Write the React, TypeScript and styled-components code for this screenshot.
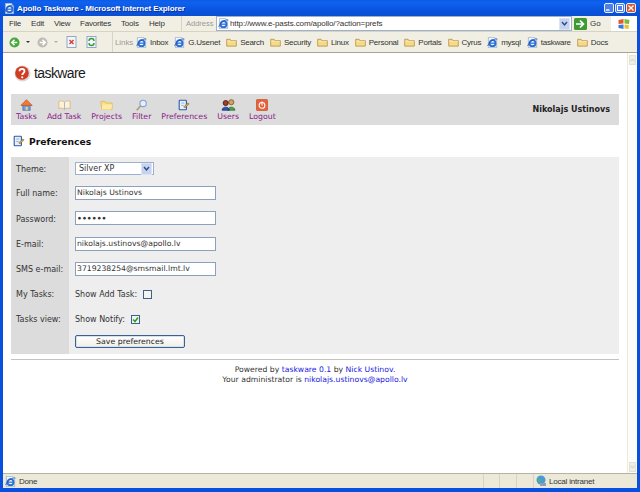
import styled, { createGlobalStyle } from "styled-components"

const GlobalStyle = createGlobalStyle`
  html, body {
    margin: 0;
    padding: 0;
    width: 640px;
    height: 492px;
    overflow: hidden;
  }
`

const Window = styled.div`
  display: flex;
  flex-direction: column;
  width: 640px;
  height: 492px;
  box-sizing: border-box;
  padding: 0 3px 4px;
  background: #0a50e0;
  font-family: "Liberation Sans", Arial, sans-serif;
  font-size: 9px;
  color: #222;
`

const TitleBar = styled.div`
  display: flex;
  align-items: center;
  height: 16px;
  margin: 0 -3px;
  padding: 0 4px 0 4px;
  gap: 1px;
  background: linear-gradient(180deg, #0a5be8 0%, #0f62ee 15%, #0852dd 70%, #0a4fd0 100%);
  color: #fff;
  font-size: 8px;
  font-weight: bold;
  letter-spacing: -0.1px;
  text-shadow: 1px 1px 0 #0a2f9c;
`

const TitleText = styled.span`
  flex: 1;
  margin-left: 1px;
  white-space: nowrap;
`

const WinButton = styled.div<{ $close?: boolean }>`
  display: flex;
  align-items: center;
  justify-content: center;
  width: 8px;
  height: 8px;
  border: 1px solid #e8eefc;
  border-radius: 2px;
  box-sizing: content-box;
  background: ${(p) => (p.$close ? "#d9532c" : "#4f80ea")};
`

const MenuRow = styled.div`
  display: flex;
  align-items: stretch;
  height: 16px;
  background: #f1efe4;
  border-bottom: 1px solid #d8d4c2;
  box-sizing: border-box;
`

const MenuItems = styled.div`
  display: flex;
  align-items: center;
  width: 179px;
  padding-left: 6px;
  box-sizing: border-box;
  border-right: 1px solid #d8d4c2;
`

const MenuItem = styled.span<{ $w: number }>`
  width: ${(p) => p.$w}px;
  font-size: 8px;
  letter-spacing: -0.2px;
  color: #333;
`

const AddressLabel = styled.span`
  display: flex;
  align-items: center;
  width: 34px;
  box-sizing: border-box;
  padding-left: 4px;
  color: #999;
  font-size: 7.5px;
`

const AddressBox = styled.div`
  display: flex;
  flex: 1;
  align-items: center;
  gap: 1px;
  padding-left: 1px;
  background: #fff;
  border: 1px solid #9db1cc;
  font-size: 8px;
  letter-spacing: -0.1px;
  color: #333;
  white-space: nowrap;
`

const AddressText = styled.span`
  flex: 1;
`

const Dropdown = styled.div`
  display: flex;
  align-items: center;
  justify-content: center;
  width: 11px;
  height: 12px;
  margin-right: 1px;
  background: #c5d3f0;
  border: 1px solid #dbe4f6;
  box-sizing: border-box;
`

const GoButton = styled.div`
  display: flex;
  align-items: center;
  gap: 3px;
  width: 39px;
  padding-left: 2px;
  box-sizing: border-box;
  font-size: 8px;
  color: #333;
`

const Flag = styled.div`
  display: flex;
  align-items: center;
  justify-content: center;
  width: 26px;
  background: #fff;
`

const ToolRow = styled.div`
  display: flex;
  align-items: center;
  height: 21px;
  background: #f1efe4;
  border-bottom: 1px solid #a7a493;
  box-sizing: border-box;
`

const ToolGroup = styled.div`
  display: flex;
  align-items: center;
  width: 110px;
  height: 100%;
  padding-left: 5px;
  box-sizing: border-box;
  border-right: 1px solid #d8d4c2;
`

const ToolIcon = styled.span<{ $gap: number }>`
  display: flex;
  margin-left: ${(p) => p.$gap}px;
`

const SmallArrow = styled.span<{ $dim?: boolean }>`
  width: 0;
  height: 0;
  margin-left: 6px;
  border-left: 2px solid transparent;
  border-right: 2px solid transparent;
  border-top: 2px solid ${(p) => (p.$dim ? "#b0aea2" : "#333")};
`

const LinksLabel = styled.span`
  width: 21px;
  margin-left: 2px;
  color: #999;
  font-size: 8px;
  letter-spacing: -0.1px;
`

const LinkItem = styled.span`
  display: inline-flex;
  align-items: center;
  gap: 3px;
  padding-right: 6px;
  font-size: 8px;
  letter-spacing: -0.25px;
  color: #333;
  white-space: nowrap;
`

const Main = styled.div`
  display: flex;
  flex: 1;
  min-height: 0;
  background: #fff;
`

const Page = styled.div`
  flex: 1;
  padding: 0 8px;
  font-family: "DejaVu Sans", Verdana, sans-serif;
  font-size: 8px;
  color: #333;
`

const Scrollbar = styled.div`
  width: 10px;
  background: #fdfdfa;
  border-left: 1px solid #eceae0;
  display: flex;
  flex-direction: column;
  justify-content: space-between;
  padding: 2px 1px 1px;
  box-sizing: border-box;
`

const ScrollButton = styled.div`
  display: flex;
  align-items: center;
  justify-content: center;
  height: 10px;
  background: #f0efe6;
  border: 1px solid #e4e2d4;
  box-sizing: border-box;
`

const Logo = styled.div`
  display: flex;
  align-items: center;
  gap: 3px;
  height: 41px;
  padding: 0 0 1px 3px;
  box-sizing: border-box;
  font-family: "Liberation Sans", Arial, sans-serif;
  font-size: 14px;
  letter-spacing: -0.6px;
  color: #1a1a1a;
`

const NavBar = styled.div`
  display: flex;
  align-items: center;
  justify-content: space-between;
  height: 31px;
  padding: 0 9px 0 5px;
  background: #dcdcdc;
`

const NavItems = styled.div`
  display: flex;
  gap: 10px;
`

const NavItem = styled.a`
  display: flex;
  flex-direction: column;
  align-items: center;
  gap: 1px;
  font-size: 7.8px;
  color: #8a1a8a;
  white-space: nowrap;
`

const UserName = styled.span`
  font-weight: bold;
  color: #222;
`

const Heading = styled.h1`
  display: flex;
  align-items: center;
  gap: 4px;
  height: 32px;
  margin: 0;
  padding-left: 2px;
  font-size: 9.2px;
  font-weight: bold;
  color: #111;
`

const FormTable = styled.div`
  display: grid;
  grid-template-columns: 58px 1fr;
  grid-template-rows: 23px 25px 26px 25px 25px 25px 25px 23px;
  height: 197px;
  background: #eeeeee;
`

const Label = styled.div`
  display: flex;
  align-items: center;
  padding: 2px 0 0 5px;
  background: #dcdcdc;
`

const Field = styled.div<{ $top?: number; $bottom?: number }>`
  display: flex;
  align-items: center;
  gap: 6px;
  padding: ${(p) => p.$top ?? 0}px 0 ${(p) => p.$bottom ?? 0}px 6px;
`

const SelectBox = styled.div`
  display: flex;
  align-items: center;
  justify-content: space-between;
  width: 79px;
  height: 13px;
  box-sizing: border-box;
  padding: 0 0 0 3px;
  background: #fff;
  border: 1px solid #9db1cc;
`

const TextInput = styled.input`
  width: 141px;
  height: 14px;
  box-sizing: border-box;
  padding: 0 1px;
  background: #fff;
  border: 1px solid #8ba0bc;
  font-family: "DejaVu Sans", Verdana, sans-serif;
  font-size: 7.7px;
  color: #333;
  outline: none;

  &[type="password"] {
    font-weight: bold;
  }
`

const Check = styled.span`
  display: flex;
  align-items: center;
  justify-content: center;
  width: 7px;
  height: 7px;
  background: #f4f4ee;
  border: 1px solid #3e5f90;
`

const SaveButton = styled.button`
  width: 110px;
  height: 13px;
  padding: 0;
  background: linear-gradient(180deg, #ffffff, #f0efe6);
  border: 1px solid #3e5f90;
  border-radius: 2px;
  box-shadow: inset 0 0 0 1px #d5e0f0;
  font-family: "DejaVu Sans", Verdana, sans-serif;
  font-size: 7.8px;
  color: #222;
`

const Rule = styled.div`
  height: 1px;
  margin-top: 5px;
  background: #c4c4bc;
`

const Footer = styled.div`
  padding-top: 5px;
  text-align: center;
  font-size: 7.7px;
  line-height: 10px;
`

const FooterLink = styled.a`
  color: #2222dd;
`

const StatusBar = styled.div`
  display: flex;
  align-items: center;
  height: 15px;
  background: #ece9d8;
  border-top: 1px solid #b5b2a2;
  box-sizing: border-box;
  font-size: 8px;
  letter-spacing: -0.2px;
  color: #333;
`

const StatusMain = styled.div`
  display: flex;
  flex: 1;
  align-items: center;
  gap: 3px;
  padding-left: 2px;
`

const StatusCell = styled.div<{ $w: number }>`
  display: flex;
  align-items: center;
  gap: 2px;
  width: ${(p) => p.$w}px;
  height: 100%;
  padding-left: 1px;
  box-sizing: border-box;
  border-left: 1px solid #d6d3c2;
`

const IeIcon = ({ size = 11 }: { size?: number }) => (
  <svg width={size} height={size} viewBox="0 0 16 16">
    <path d="M2 .5h9l3 3v12H2z" fill="#f4f7fc" stroke="#8ea6c8" />
    <circle cx="8" cy="9" r="4.400" fill="none" stroke="#2a6fd6" strokeWidth="2.600" />
    <path d="M4 9h8" stroke="#2a6fd6" strokeWidth="1.800" />
    <path d="M1 13C4 6 10 2 15 3" fill="none" stroke="#1c4fae" strokeWidth="1.200" />
  </svg>
)

const FolderIcon = () => (
  <svg width="11" height="10" viewBox="0 0 16 14">
    <path d="M1 3h5l1 2h8v8H1z" fill="#f6d98a" stroke="#a8842f" />
    <path d="M1.500 6h13" stroke="#fbeebb" />
  </svg>
)

const PrefsIcon = () => (
  <svg width="12" height="12" viewBox="0 0 15 15">
    <rect x="1.500" y="1.500" width="9" height="12" rx="1" fill="#e9f0fa" stroke="#2c5ea8" strokeWidth="1.400" />
    <path d="M4 5h4M4 8h3" stroke="#7fa2d2" />
    <path d="M7 10l5-5 2 1-5 5z" fill="#e3a23a" stroke="#555" strokeWidth="0.600" />
  </svg>
)

const NavIcon = ({ name }: { name: string }) => {
  switch (name) {
    case "Tasks":
      return (
        <svg width="13" height="12" viewBox="0 0 16 15">
          <rect x="3.500" y="7" width="9" height="7" fill="#6f9fe0" stroke="#4471b0" />
          <path d="M1 8l7-7 7 7z" fill="#ee7b3a" stroke="#c5531c" />
          <rect x="7" y="10" width="2.500" height="4" fill="#f3d47a" />
        </svg>
      )
    case "Add Task":
      return (
        <svg width="13" height="12" viewBox="0 0 16 15">
          <path d="M8 4C6 2 3 2 1 3v9c2-1 5-1 7 1 2-2 5-2 7-1V3c-2-1-5-1-7 1z" fill="#fbf3dc" stroke="#e0b06a" />
          <path d="M8 4v9" stroke="#8fa8d8" />
        </svg>
      )
    case "Projects":
      return (
        <svg width="13" height="12" viewBox="0 0 16 15">
          <path d="M1 3h5l1 2h8v8H2z" fill="#fbdf7d" stroke="#e0b84c" />
          <path d="M3 7h12l-1 6H2z" fill="#fdeca8" />
        </svg>
      )
    case "Filter":
      return (
        <svg width="13" height="12" viewBox="0 0 16 15">
          <circle cx="10" cy="5.500" r="4" fill="#e4effb" stroke="#7fa2d2" strokeWidth="1.400" />
          <path d="M7 8.500L2 14" stroke="#b09a72" strokeWidth="2" />
        </svg>
      )
    case "Preferences":
      return <PrefsIcon />
    case "Users":
      return (
        <svg width="15" height="12" viewBox="0 0 18 15">
          <circle cx="12.500" cy="4" r="3.200" fill="#d9a05c" stroke="#7c5326" />
          <path d="M8 14c0-5 9-5 9 0z" fill="#4fa24a" stroke="#2f6e2c" />
          <circle cx="5.500" cy="5" r="3.200" fill="#b3361f" stroke="#222" />
          <path d="M1 14c0-5 9-5 9 0z" fill="#2b55b8" stroke="#1b2f70" />
        </svg>
      )
    default:
      return (
        <svg width="12" height="12" viewBox="0 0 15 15">
          <rect x="0.500" y="0.500" width="14" height="14" rx="1.500" fill="#e8603a" stroke="#c4542a" />
          <circle cx="7.500" cy="8" r="3.600" fill="none" stroke="#fff" strokeWidth="1.300" />
          <path d="M7.500 3v5" stroke="#fff" strokeWidth="1.300" />
        </svg>
      )
  }
}

const DownChevron = () => (
  <svg width="7" height="6" viewBox="0 0 7 6">
    <path d="M1 1l2.500 3L6 1" fill="none" stroke="#2c4a86" strokeWidth="1.400" />
  </svg>
)

const menus: [string, number][] = [
  ["File", 22],
  ["Edit", 23],
  ["View", 26],
  ["Favorites", 41],
  ["Tools", 28],
  ["Help", 24]
]

const links = [
  { label: "Inbox", ie: true },
  { label: "G.Usenet", ie: true },
  { label: "Search" },
  { label: "Security" },
  { label: "Linux" },
  { label: "Personal" },
  { label: "Portals" },
  { label: "Cyrus" },
  { label: "mysql", ie: true },
  { label: "taskware", ie: true },
  { label: "Docs" }
]

const navItems = ["Tasks", "Add Task", "Projects", "Filter", "Preferences", "Users", "Logout"]

const App = () => {
  return (
    <Window>
      <GlobalStyle />
      <TitleBar>
        <IeIcon />
        <TitleText>Apollo Taskware - Microsoft Internet Explorer</TitleText>
        <WinButton>
          <svg width="6" height="6" viewBox="0 0 6 6">
            <path d="M0 5h3.500" stroke="#fff" strokeWidth="1.400" />
          </svg>
        </WinButton>
        <WinButton>
          <svg width="6" height="6" viewBox="0 0 6 6">
            <rect x="0.500" y="0.500" width="5" height="5" fill="none" stroke="#fff" />
          </svg>
        </WinButton>
        <WinButton $close>
          <svg width="6" height="6" viewBox="0 0 6 6">
            <path d="M.5.500l5 5M5.500.500l-5 5" stroke="#fff" strokeWidth="1.300" />
          </svg>
        </WinButton>
      </TitleBar>

      <MenuRow>
        <MenuItems>
          {menus.map(([label, w]) => (
            <MenuItem key={label} $w={w}>
              {label}
            </MenuItem>
          ))}
        </MenuItems>
        <AddressLabel>Address</AddressLabel>
        <AddressBox>
          <IeIcon />
          <AddressText>http://www.e-pasts.com/apollo/?action=prefs</AddressText>
          <Dropdown>
            <DownChevron />
          </Dropdown>
        </AddressBox>
        <GoButton>
          <svg width="13" height="12" viewBox="0 0 13 12">
            <rect width="13" height="12" rx="1.500" fill="#3d9a34" />
            <path d="M2 6h7M6 2.500L9.500 6 6 9.500" fill="none" stroke="#fff" strokeWidth="1.700" />
          </svg>
          Go
        </GoButton>
        <Flag>
          <svg width="14" height="12" viewBox="0 0 13 12">
            <path d="M1 2l5-1v4.500L1 6z" fill="#e8582c" />
            <path d="M7 1l5 1-.5 4L7 5.500z" fill="#7cb83a" />
            <path d="M1 7l5-.5V11l-5-1z" fill="#3a78d8" />
            <path d="M7 6.500l4.500.5-.5 4-4-.5z" fill="#f2c02e" />
          </svg>
        </Flag>
      </MenuRow>

      <ToolRow>
        <ToolGroup>
          <ToolIcon $gap={1}>
            <svg width="11" height="11" viewBox="0 0 12 12">
              <circle cx="6" cy="6" r="5.500" fill="#45a83a" />
              <path d="M9 6H3.500M6 3L3 6l3 3" fill="none" stroke="#fff" strokeWidth="1.700" />
            </svg>
          </ToolIcon>
          <SmallArrow />
          <ToolIcon $gap={7}>
            <svg width="11" height="11" viewBox="0 0 12 12">
              <circle cx="6" cy="6" r="5.500" fill="#bdbdb6" />
              <path d="M3 6h5.500M6 3l3 3-3 3" fill="none" stroke="#fff" strokeWidth="1.700" />
            </svg>
          </ToolIcon>
          <SmallArrow $dim />
          <ToolIcon $gap={8}>
            <svg width="11" height="12" viewBox="0 0 11 12">
              <rect x="1" y="0.500" width="9" height="11" fill="#f2f5fb" stroke="#93a8c8" />
              <path d="M3.500 4l4 4M7.500 4l-4 4" stroke="#d0402a" strokeWidth="1.400" />
            </svg>
          </ToolIcon>
          <ToolIcon $gap={9}>
            <svg width="11" height="12" viewBox="0 0 11 12">
              <rect x="1" y="0.500" width="9" height="11" fill="#f2f5fb" stroke="#93a8c8" />
              <path d="M3 5a2.500 2.500 0 0 1 5 0M8 7a2.500 2.500 0 0 1-5 0" fill="none" stroke="#3a9a34" strokeWidth="1.400" />
            </svg>
          </ToolIcon>
        </ToolGroup>
        <LinksLabel>Links</LinksLabel>
        {links.map((link) => (
          <LinkItem key={link.label}>
            {link.ie ? <IeIcon /> : <FolderIcon />}
            {link.label}
          </LinkItem>
        ))}
      </ToolRow>

      <Main>
        <Page>
          <Logo>
            <svg width="17" height="17" viewBox="0 0 17 17">
              <circle cx="8.500" cy="8.500" r="8" fill="#d8d8d8" />
              <circle cx="8" cy="8" r="6.800" fill="#d23a22" />
              <path d="M5.500 6.300c0-3.200 5-3.200 5 0 0 1.900-2.300 2-2.300 3.800" fill="none" stroke="#fff" strokeWidth="1.800" />
              <circle cx="8.200" cy="12.300" r="1.100" fill="#fff" />
            </svg>
            taskware
          </Logo>
          <NavBar>
            <NavItems>
              {navItems.map((item) => (
                <NavItem key={item}>
                  <NavIcon name={item} />
                  {item}
                </NavItem>
              ))}
            </NavItems>
            <UserName>Nikolajs Ustinovs</UserName>
          </NavBar>
          <Heading>
            <PrefsIcon />
            Preferences
          </Heading>
          <FormTable>
            <Label>Theme:</Label>
            <Field>
              <SelectBox>
                Silver XP
                <Dropdown>
                  <DownChevron />
                </Dropdown>
              </SelectBox>
            </Field>
            <Label>Full name:</Label>
            <Field>
              <TextInput defaultValue="Nikolajs Ustinovs" />
            </Field>
            <Label>Password:</Label>
            <Field>
              <TextInput type="password" defaultValue="secret" />
            </Field>
            <Label>E-mail:</Label>
            <Field>
              <TextInput defaultValue="nikolajs.ustinovs@apollo.lv" />
            </Field>
            <Label>SMS e-mail:</Label>
            <Field>
              <TextInput defaultValue="3719238254@smsmail.lmt.lv" />
            </Field>
            <Label>My Tasks:</Label>
            <Field $top={2}>
              Show Add Task:
              <Check />
            </Field>
            <Label>Tasks view:</Label>
            <Field $top={2}>
              Show Notify:
              <Check>
                <svg width="7" height="7" viewBox="0 0 7 7">
                  <path d="M1 3.500l2 2 3-4" fill="none" stroke="#21a121" strokeWidth="1.500" />
                </svg>
              </Check>
            </Field>
            <Label />
            <Field $bottom={3}>
              <SaveButton>Save preferences</SaveButton>
            </Field>
          </FormTable>
          <Rule />
          <Footer>
            Powered by <FooterLink>taskware 0.1</FooterLink> by <FooterLink>Nick Ustinov</FooterLink>.
            <br />
            Your administrator is <FooterLink>nikolajs.ustinovs@apollo.lv</FooterLink>
          </Footer>
        </Page>
        <Scrollbar>
          <ScrollButton>
            <svg width="6" height="4" viewBox="0 0 6 4">
              <path d="M.5 3.500L3 1l2.500 2.500" fill="none" stroke="#c4c2b4" />
            </svg>
          </ScrollButton>
          <ScrollButton>
            <svg width="6" height="4" viewBox="0 0 6 4">
              <path d="M.5.500L3 3 5.500.500" fill="none" stroke="#c4c2b4" />
            </svg>
          </ScrollButton>
        </Scrollbar>
      </Main>

      <StatusBar>
        <StatusMain>
          <IeIcon />
          Done
        </StatusMain>
        <StatusCell $w={16} />
        <StatusCell $w={17} />
        <StatusCell $w={17} />
        <StatusCell $w={104}>
          <svg width="12" height="12" viewBox="0 0 12 12">
            <circle cx="6" cy="5" r="4.500" fill="#4a9ad8" />
            <path d="M3 3l3 2-2 3z" fill="#5cb84a" />
            <rect x="5" y="8" width="6" height="3" fill="#8aa0b8" />
          </svg>
          Local intranet
        </StatusCell>
      </StatusBar>
    </Window>
  )
}

export default App
